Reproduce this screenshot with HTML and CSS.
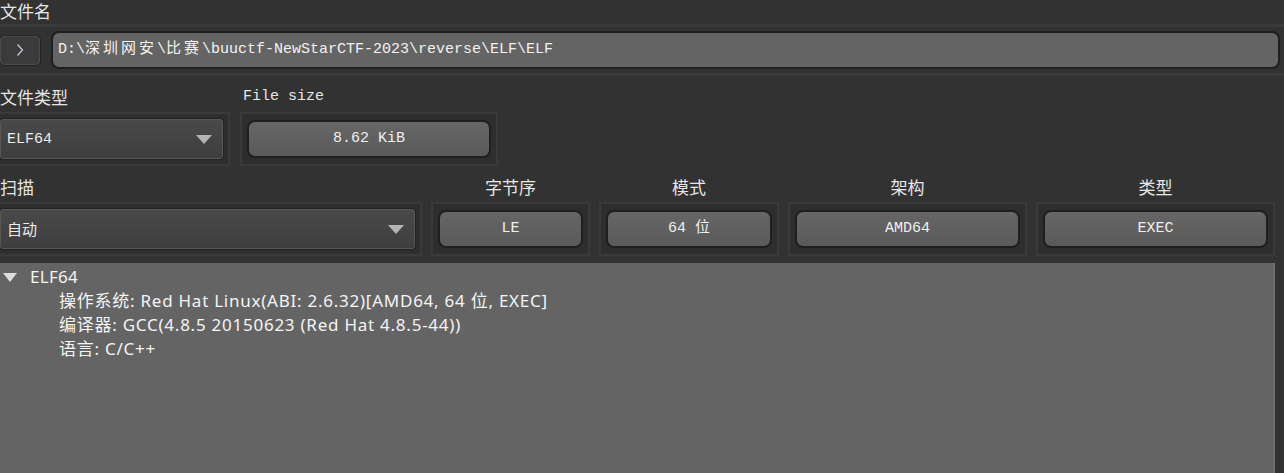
FILE: index.html
```html
<!DOCTYPE html>
<html lang="zh">
<head>
<meta charset="utf-8">
<title>ELF</title>
<link rel="stylesheet" href="styles.css">
</head>
<body>
<div class="app">
  <div class="lbl-top">文件名</div>
  <div class="path-row">
    <div class="tool-btn">
      <svg width="8" height="14" viewBox="0 0 8 14"><polyline points="1.5,1.5 6.5,7 1.5,12.5" fill="none" stroke="#c9d2e2" stroke-width="1.2"/></svg>
    </div>
    <div class="path-field">D:\<span class="cj">深圳网安</span>\<span class="cj">比赛</span>\buuctf-NewStarCTF-2023\reverse\ELF\ELF</div>
  </div>

  <div class="grid-row">
    <div class="col first w-type">
      <div class="lbl">文件类型</div>
      <div class="frame"><div class="combo"><span class="mono">ELF64</span><i class="caret"></i></div></div>
    </div>
    <div class="col w-size">
      <div class="lbl mono">File size</div>
      <div class="frame"><div class="vbtn">8.62 KiB</div></div>
    </div>
  </div>

  <div class="grid-row gap9">
    <div class="col first w-scan">
      <div class="lbl">扫描</div>
      <div class="frame"><div class="combo"><span class="mono">自动</span><i class="caret"></i></div></div>
    </div>
    <div class="col w-le">
      <div class="lbl center">字节序</div>
      <div class="frame"><div class="vbtn">LE</div></div>
    </div>
    <div class="col w-mode">
      <div class="lbl center">模式</div>
      <div class="frame"><div class="vbtn">64 位</div></div>
    </div>
    <div class="col w-arch">
      <div class="lbl center">架构</div>
      <div class="frame"><div class="vbtn">AMD64</div></div>
    </div>
    <div class="col w-kind">
      <div class="lbl center">类型</div>
      <div class="frame"><div class="vbtn">EXEC</div></div>
    </div>
  </div>

  <div class="tree">
    <div class="node"><i class="twisty"></i><span>ELF64</span></div>
    <div class="children">
      <div class="leaf">操作系统: Red Hat Linux(ABI: 2.6.32)[AMD64, 64 位, EXEC]</div>
      <div class="leaf">编译器: GCC(4.8.5 20150623 (Red Hat 4.8.5-44))</div>
      <div class="leaf">语言: C/C++</div>
    </div>
  </div>
</div>
</body>
</html>
```
FILE: styles.css
```css
html, body {
  margin: 0;
  padding: 0;
}
body {
  background: #323232;
  color: #e6e6e6;
  font-family: "Noto Sans CJK SC", sans-serif;
  width: 1284px;
  height: 473px;
  overflow: hidden;
}
.app {
  width: 1284px;
}
.mono {
  font-family: "Liberation Mono", "Noto Sans CJK SC", monospace;
  font-size: 15px;
}
.lbl-top {
  height: 24px;
  line-height: 22px;
  font-size: 17px;
}
.path-row {
  display: flex;
  align-items: center;
  gap: 11px;
  border-top: 3px solid #3a3a3a;
  border-bottom: 3px solid #3a3a3a;
  padding: 4px 4px 4px 0;
}
.tool-btn {
  width: 40px;
  height: 29px;
  box-sizing: border-box;
  border: 1px solid #4b4b4b;
  box-shadow: 0 0 0 1px #262626;
  border-radius: 4px;
  background: #3b3b3b;
  display: flex;
  align-items: center;
  justify-content: center;
}
.path-field {
  flex: 1;
  height: 38px;
  box-sizing: border-box;
  border: 2px solid #1f1f1f;
  border-radius: 8px;
  background: #646464;
  padding-left: 5px;
  font-family: "Liberation Mono", "Noto Sans CJK SC", monospace;
  font-size: 15px;
  line-height: 34px;
  color: #f2f2f2;
  white-space: nowrap;
}
.cj {
  letter-spacing: 3px;
}
.grid-row {
  display: flex;
  gap: 10px;
}
.grid-row.gap9 {
  gap: 9px;
}
.col {
  display: flex;
  flex-direction: column;
  flex: none;
}
.col.first {
  margin-left: -7px;
}
.col.first .lbl {
  padding-left: 7px;
}
.w-type { width: 237px; }
.w-size { width: 258px; }
.w-scan { width: 429px; }
.w-le { width: 159px; }
.w-mode { width: 180px; }
.w-arch { width: 239px; }
.w-kind { width: 239px; }
.lbl {
  height: 22px;
  line-height: 22px;
  margin: 10px 0 4px;
  font-size: 17px;
  white-space: nowrap;
}
.lbl.mono {
  font-size: 15px;
  padding-left: 3px;
}
.lbl.center {
  text-align: center;
}
.frame {
  box-sizing: border-box;
  height: 54px;
  border: 2px solid #3a3a3a;
  background: #2e2e2e;
  padding: 0 5px;
  display: flex;
  align-items: center;
}
.combo {
  flex: 1;
  height: 40px;
  box-sizing: border-box;
  border: 1px solid #575757;
  box-shadow: 0 0 0 1px #232323;
  border-radius: 3px;
  background: linear-gradient(#494949, #3e3e3e);
  display: flex;
  align-items: center;
  justify-content: space-between;
  padding: 0 10px 0 6px;
  color: #ececec;
}
.caret {
  width: 0;
  height: 0;
  border-left: 8px solid transparent;
  border-right: 8px solid transparent;
  border-top: 9px solid #b4b4b4;
}
.vbtn {
  flex: 1;
  height: 38px;
  box-sizing: border-box;
  border: 2px solid #1f1f1f;
  border-radius: 8px;
  background: linear-gradient(#666666, #5a5a5a);
  text-align: center;
  font-family: "Liberation Mono", "Noto Sans CJK SC", monospace;
  font-size: 15px;
  line-height: 34px;
  color: #f0f0f0;
}
.tree {
  margin-top: 7px;
  width: 1275px;
  height: 220px;
  box-sizing: border-box;
  border-right: 2px solid #707070;
  background: #646464;
  padding-top: 2px;
  font-family: "Noto Sans", "Noto Sans CJK SC", sans-serif;
  font-size: 17px;
  line-height: 24px;
  color: #f4f4f4;
}
.node {
  display: flex;
  align-items: center;
}
.node span {
  letter-spacing: 0.3px;
}
.twisty {
  width: 0;
  height: 0;
  border-left: 7px solid transparent;
  border-right: 7px solid transparent;
  border-top: 9px solid #dcdcdc;
  margin: 0 13px 0 3px;
}
.children {
  padding-left: 59px;
}
.leaf {
  white-space: nowrap;
  letter-spacing: 0.75px;
}
```
